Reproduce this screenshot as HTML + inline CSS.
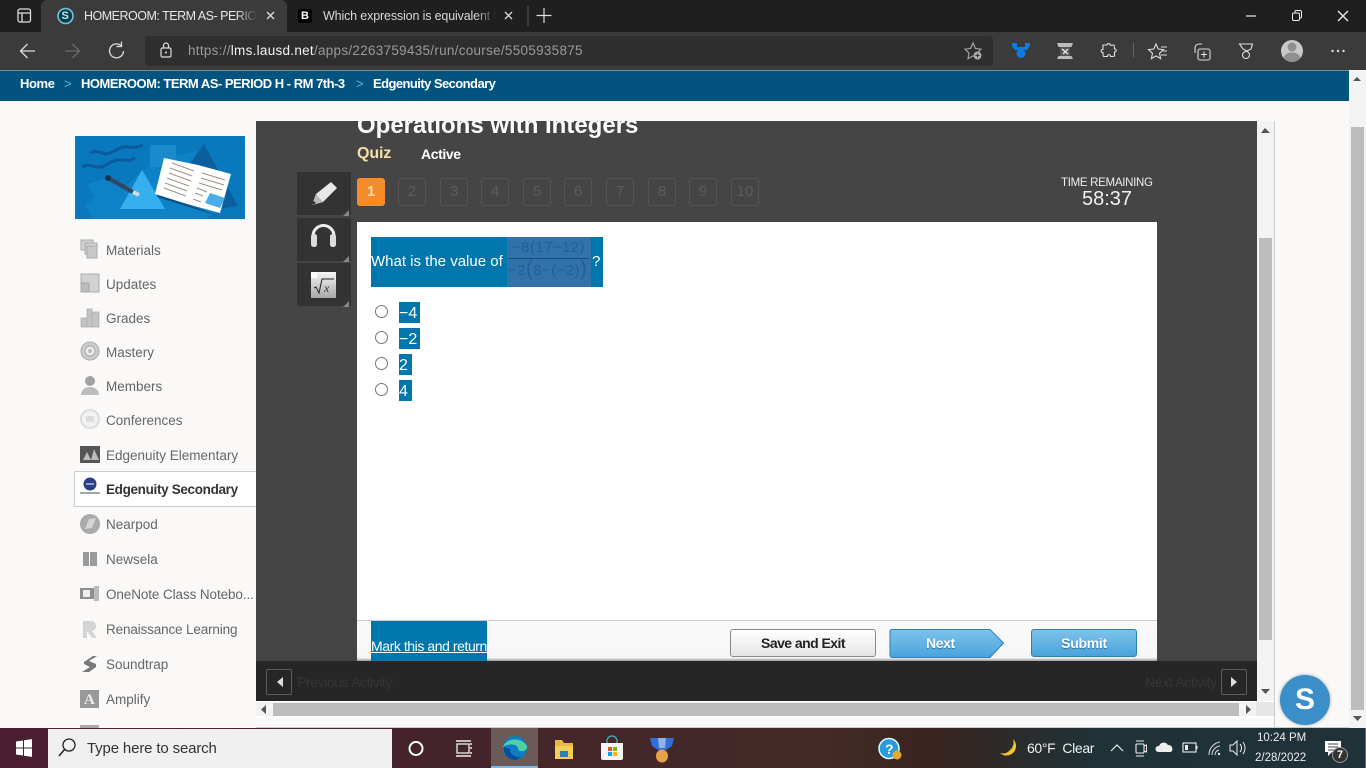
<!DOCTYPE html>
<html><head><meta charset="utf-8"><title>Edgenuity</title>
<style>
html,body{margin:0;padding:0;width:1366px;height:768px;overflow:hidden;background:#faf9f8;font-family:"Liberation Sans",sans-serif}
.a{position:absolute}
.t{position:absolute;white-space:nowrap}
.n{position:absolute;left:106px;font-size:13.5px;color:#666;white-space:nowrap;letter-spacing:0;line-height:18px}
.q{position:absolute;top:178px;width:26px;height:26px;border:1px solid #555;border-radius:3px;color:#5c5c5c;font-size:15px;text-align:center;line-height:26px}
.tool{position:absolute;left:297px;width:54px;height:43px;background:#333}
.hl{position:absolute;left:399px;height:21px;background:#0077ac;color:#fff;font-size:16px;line-height:22px}
.r{position:absolute;left:375px;width:11px;height:11px;border:1px solid #777;border-radius:50%;background:#fff}
.fade{-webkit-mask-image:linear-gradient(90deg,#000 88%,transparent 100%);mask-image:linear-gradient(90deg,#000 88%,transparent 100%)}
</style></head><body>

<!-- browser chrome -->
<div class="a" style="left:0;top:0;width:1366px;height:32px;background:#1f1f1f"></div>
<div class="a" style="left:41px;top:0;width:246px;height:32px;background:#3b3b3b;border-radius:6px 6px 0 0"></div>
<div class="a" style="left:0;top:32px;width:1366px;height:38px;background:#3b3b3b"></div>
<div class="a" style="left:0;top:70px;width:1349px;height:1px;background:#6f8fa3"></div>
<div class="a" style="left:145px;top:36px;width:848px;height:30px;background:#2e2e2e;border-radius:4px"></div>
<div class="t fade" style="left:84px;top:8px;font-size:12.5px;line-height:16px;color:#e6e6e6;width:173px;overflow:hidden;letter-spacing:-.5px">HOMEROOM: TERM AS- PERIOD H</div>
<div class="t fade" style="left:323px;top:8px;font-size:12.5px;line-height:16px;color:#d8d8d8;width:173px;overflow:hidden;letter-spacing:-.15px">Which expression is equivalent to</div>
<div class="t" style="left:188px;top:43px;font-size:13.5px;line-height:16px;color:#9a9a9a;letter-spacing:.28px">https://<span style="color:#f2f2f2">lms.lausd.net</span>/apps/2263759435/run/course/5505935875</div>

<!-- blue breadcrumb -->
<div class="a" style="left:0;top:71px;width:1349px;height:30px;background:#03537f"></div>
<div class="t" style="left:20px;top:76px;font-size:13px;line-height:16px;color:#fff;font-weight:bold;letter-spacing:-.4px">Home</div>
<div class="t" style="left:64px;top:76px;font-size:13px;line-height:16px;color:#5db2e4">&gt;</div>
<div class="t" style="left:81px;top:76px;font-size:13px;line-height:16px;color:#fff;font-weight:bold;letter-spacing:-.5px">HOMEROOM: TERM AS- PERIOD H - RM 7th-3</div>
<div class="t" style="left:356px;top:76px;font-size:13px;line-height:16px;color:#5db2e4">&gt;</div>
<div class="t" style="left:373px;top:76px;font-size:13px;line-height:16px;color:#fff;font-weight:bold;letter-spacing:-.56px">Edgenuity Secondary</div>

<!-- page scrollbar -->
<div class="a" style="left:1349px;top:71px;width:17px;height:657px;background:#f3f3f3"></div>
<div class="a" style="left:1351px;top:127px;width:13px;height:583px;background:#bdbdbd"></div>

<!-- sidebar -->
<svg class="a" style="left:75px;top:136px" width="170" height="83" viewBox="0 0 170 83">
<rect width="170" height="83" fill="#0a78bd"/>
<path d="M12 48l20-6 18 8 30-25 50-12 30 50-30 20H18l-8-14 10-8z" fill="#0d82c8"/>
<path d="M75 9h26v22H75z" fill="#1a8acb"/>
<path d="M100 48L129 8l34 62-28 4z" fill="#0a5f9c"/>
<path d="M67 34L45 73h45z" fill="#36afef"/>
<path d="M15 17c8-5 12 3 20 0s10-7 18-6 10 0 15-2M7 31c8-5 14 3 22-1s10-7 18-6 9 0 13-2" stroke="#0a5a9c" stroke-width="3" fill="none"/>
<path d="M33 42l25 14" stroke="#33475e" stroke-width="4"/><path d="M58 56l6 3" stroke="#cde" stroke-width="4"/>
<circle cx="33" cy="42" r="3" fill="#16304c"/>
<g transform="translate(2,1)">
<path d="M80 60l8-38-6 34 62 24z" fill="#0a4f86"/>
<path d="M87 21l34 7 33 9-11 39-33-9-32-10z" fill="#fff"/>
<path d="M95 26l22 8M93 31l22 8M92 36l22 8M90 41l22 8M88 46l22 8M87 51l22 8M125 36l23 7M124 41l23 7M122 46l23 7M120 51l10 4M118 56l8 3M116 62l8 3" stroke="#9b9388" stroke-width="1" fill="none"/>
<path d="M128 66l5-10 15 5-5 10z" fill="#48aee8"/>
</g>
</svg>

<div class="n" style="top:242px">Materials</div>
<div class="n" style="top:276px">Updates</div>
<div class="n" style="top:310px">Grades</div>
<div class="n" style="top:344px">Mastery</div>
<div class="n" style="top:378px">Members</div>
<div class="n" style="top:412px">Conferences</div>
<div class="n" style="top:447px">Edgenuity Elementary</div>
<div class="a" style="left:74px;top:471px;width:182px;height:34px;background:#fff;border:1px solid #ccc;border-right:none"></div>
<div class="n" style="top:481px;color:#333;font-weight:bold;letter-spacing:-.33px">Edgenuity Secondary</div>
<div class="n" style="top:516px">Nearpod</div>
<div class="n" style="top:551px">Newsela</div>
<div class="n" style="top:586px;letter-spacing:-.1px">OneNote Class Notebo...</div>
<div class="n" style="top:621px;letter-spacing:-.15px">Renaissance Learning</div>
<div class="n" style="top:656px">Soundtrap</div>
<div class="n" style="top:691px">Amplify</div>

<svg class="a" style="left:78px;top:238px" width="24" height="490" viewBox="0 0 24 490">
<g fill="#d2d2d2" stroke="#aaa">
<rect x="3" y="2" width="12" height="10"/><rect x="7" y="5" width="12" height="11"/><rect x="9" y="8" width="10" height="12" fill="#c8c8c8"/>
<rect x="3" y="36" width="18" height="18"/><rect x="3" y="45" width="8" height="9" fill="#bbb"/>
</g>
<path d="M3 80h6v9H3zM9 71h5v18H9zM14 74h7v15h-7z" fill="#c4c4c4" stroke="#aaa" stroke-width=".7"/>
<circle cx="12" cy="113" r="9" fill="#ccc" stroke="#aaa"/><circle cx="12" cy="113" r="5" fill="#eee" stroke="#aaa"/><circle cx="12" cy="113" r="2" fill="#bbb"/>
<circle cx="12" cy="143" r="5" fill="#a2a2a2"/><path d="M3 157c0-6 5-8 9-8s9 2 9 8z" fill="#bdbdbd"/>
<circle cx="12" cy="181" r="9" fill="#f2f2f2" stroke="#ddd" stroke-width="2"/><rect x="8" y="178" width="8" height="6" fill="#ddd"/>
<rect x="2" y="208" width="20" height="17" fill="#555"/><path d="M5 222l4-8 4 8zM13 222l3-11 5 11z" fill="#bbb"/>
<circle cx="12" cy="246" r="6.5" fill="#2a3f83"/><path d="M2 254h20v2H2z" fill="#9aa"/><path d="M8 246h8" stroke="#fff"/>
<circle cx="12" cy="286" r="10" fill="#aaa"/><path d="M7 291l4-10 7-1-4 10z" fill="#d5d5d5"/>
<path d="M5 314h6v14H5zM12 314h7v14h-7z" fill="#9a9a9a"/>
<path d="M2 350h14v11H2z" fill="#8f8f8f"/><path d="M16 348h5v15h-5z" fill="#bbb"/><rect x="5" y="352" width="7" height="7" fill="#eee"/>
<path d="M5 383h8c6 0 7 9 1 10l5 7h-5l-5-7v7H5z" fill="#d4d4d4"/>
<path d="M6 424l9-6h4l-8 5 7 3v3l-7 5H4l8-5-6-3z" fill="#777"/>
<rect x="2" y="452" width="19" height="18" fill="#999"/><text x="6" y="466" font-family="Liberation Serif" font-weight="bold" font-size="15" fill="#eee">A</text>
<rect x="2" y="487" width="19" height="3" fill="#aaa"/>
</svg>

<!-- activity frame -->
<div class="a" style="left:256px;top:121px;width:1001px;height:540px;background:#454545;overflow:hidden">
  <div class="t" style="left:101px;top:-9px;font-size:24px;line-height:28px;font-weight:bold;color:#fff">Operations with Integers</div>
</div>
<div class="a" style="left:256px;top:661px;width:1001px;height:40px;background:#262626"></div>
<div class="a" style="left:1257px;top:121px;width:17px;height:580px;background:#f3f3f3"></div>
<div class="a" style="left:1259px;top:238px;width:13px;height:402px;background:#bdbdbd"></div>
<div class="a" style="left:1274px;top:121px;width:1px;height:607px;background:#ccc"></div>
<div class="a" style="left:256px;top:701px;width:1018px;height:17px;background:#fff"></div>
<div class="a" style="left:256px;top:702px;width:1018px;height:14px;background:#f3f3f3"></div>
<div class="a" style="left:273px;top:703px;width:966px;height:13px;background:#bdbdbd"></div>
<div class="a" style="left:1256px;top:702px;width:18px;height:14px;background:#e6e6e6"></div>
<div class="a" style="left:256px;top:727px;width:1093px;height:1px;background:#ccc"></div>

<div class="t" style="left:357px;top:145px;font-size:16px;line-height:18px;font-weight:bold;color:#f6e0a8;letter-spacing:-.1px">Quiz</div>
<div class="t" style="left:421px;top:146px;font-size:14px;line-height:17px;font-weight:bold;color:#fff;letter-spacing:-.4px">Active</div>

<div class="tool" style="top:172px"></div><div class="tool" style="top:218px"></div><div class="tool" style="top:263px"></div>
<svg class="a" style="left:297px;top:172px" width="54" height="136" viewBox="0 0 54 136">
<path d="M15 33l4-11 15-12 6 6-14 14z" fill="#e8e8e8"/><path d="M15 33l4-11 7 8z" fill="#bbb"/><path d="M15 33l1.500-4 2.500 2z" fill="#222"/>
<path d="M16 66v-2a10.500 10.500 0 0 1 21 0v2" fill="none" stroke="#eee" stroke-width="3"/>
<rect x="14" y="62" width="6" height="13" rx="2.500" fill="#ddd"/><rect x="33" y="62" width="6" height="13" rx="2.500" fill="#ddd"/>
<path d="M19 100l-5 5v21h25v-26z" fill="url(#g)"/><path d="M14 100h6v6h-6z" fill="#fff"/>
<defs><linearGradient id="g" x1="0" x2="0" y1="0" y2="1"><stop offset="0" stop-color="#f5f5f5"/><stop offset="1" stop-color="#a8a8a8"/></linearGradient></defs>
<path d="M17 116l2-1 3 6 3-14h12" fill="none" stroke="#222" stroke-width="1"/>
<text x="27" y="120" font-family="Liberation Serif" font-style="italic" font-size="12" fill="#333">x</text>
<path d="M52 38v6h-6zM52 84v6h-6zM52 129v6h-6z" fill="#888"/>
</svg>

<div class="a" style="left:357px;top:178px;width:28px;height:28px;border-radius:3px;background:#f68b2a;color:#fff;font-size:15px;font-weight:bold;text-align:center;line-height:28px"><span style="color:#fbdcb8">1</span></div>
<div class="q" style="left:398px">2</div><div class="q" style="left:440px">3</div><div class="q" style="left:481px">4</div><div class="q" style="left:523px">5</div><div class="q" style="left:564px">6</div><div class="q" style="left:606px">7</div><div class="q" style="left:648px">8</div><div class="q" style="left:689px">9</div><div class="q" style="left:731px">10</div>

<div class="t" style="left:1061px;top:176px;font-size:11.5px;line-height:14px;color:#eee;letter-spacing:-.3px">TIME REMAINING</div>
<div class="t" style="left:1082px;top:186px;font-size:20px;line-height:26px;color:#f2f2f2">58:37</div>

<!-- question panel -->
<div class="a" style="left:357px;top:222px;width:800px;height:438px;background:#fff"></div>
<div class="a" style="left:371px;top:237px;width:232px;height:50px;background:#0077ac"></div>
<div class="a" style="left:507px;top:237px;width:84px;height:50px;background:#3172aa"></div>
<div class="t" style="left:371px;top:253px;font-size:15px;line-height:17px;color:#fff">What is the value of</div>
<div class="t" style="left:592px;top:253px;font-size:15px;line-height:17px;color:#fff">?</div>
<div class="a" style="left:508px;top:258px;width:81px;height:1px;background:#14507f"></div>
<div class="t" style="left:512px;top:239px;font-size:15px;line-height:17px;color:#235f96;letter-spacing:.4px">−8(17−12)</div>
<div class="t" style="left:508px;top:260px;font-size:15px;line-height:17px;color:#235f96;letter-spacing:.4px">−2<span style="font-size:21px;line-height:17px">(</span>8−(−2)<span style="font-size:21px;line-height:17px">)</span></div>

<div class="r" style="top:305px"></div><div class="r" style="top:331px"></div><div class="r" style="top:357px"></div><div class="r" style="top:383px"></div>
<div class="hl" style="top:302px;width:21px"><span style="position:absolute;left:0;top:1px">−4</span></div>
<div class="hl" style="top:328px;width:21px"><span style="position:absolute;left:0;top:1px">−2</span></div>
<div class="hl" style="top:354px;width:13px"><span style="position:absolute;left:0;top:1px">2</span></div>
<div class="hl" style="top:380px;width:13px"><span style="position:absolute;left:0;top:1px">4</span></div>

<div class="a" style="left:357px;top:620px;width:800px;height:40px;background:linear-gradient(#fafafa,#f6f6f6);border-top:1px solid #ccc;box-sizing:border-box"></div>
<div class="a" style="left:357px;top:658px;width:800px;height:3px;background:linear-gradient(#f0f0f0,#999)"></div>
<div class="a" style="left:371px;top:621px;width:116px;height:40px;background:#0077ac"></div>
<div class="t" style="left:371px;top:638px;font-size:14px;line-height:16px;color:#fff;text-decoration:underline;letter-spacing:-.43px">Mark this and return</div>

<div class="a" style="left:730px;top:629px;width:146px;height:28px;box-sizing:border-box;border:1px solid #8a8a8a;border-radius:3px;background:linear-gradient(#fff,#e6e6e6);text-align:center;font-size:14px;font-weight:bold;line-height:26px;color:#222;letter-spacing:-.55px">Save and Exit</div>
<svg class="a" style="left:889px;top:629px" width="116" height="30" viewBox="0 0 116 30">
<defs><linearGradient id="b" x1="0" x2="0" y1="0" y2="1"><stop offset="0" stop-color="#7cc3ec"/><stop offset="1" stop-color="#4aa3dc"/></linearGradient></defs>
<path d="M3 .5h98L114.500 14 101 28.500H3a2 2 0 0 1-2-2V2.500a2 2 0 0 1 2-2z" fill="url(#b)" stroke="#2f7fb4"/></svg>
<div class="t" style="left:926px;top:635px;font-size:14px;line-height:17px;font-weight:bold;color:#fff;text-shadow:0 1px 1px #2a6e9e;letter-spacing:-.4px">Next</div>
<div class="a" style="left:1031px;top:629px;width:106px;height:28px;box-sizing:border-box;border:1px solid #2f7fb4;border-radius:3px;background:linear-gradient(#7cc3ec,#4aa3dc);text-align:center;font-size:14px;font-weight:bold;line-height:27px;color:#fff;text-shadow:0 1px 1px #2a6e9e;letter-spacing:-.3px">Submit</div>

<!-- bottom bar -->
<div class="a" style="left:266px;top:669px;width:24px;height:24px;border:1px solid #5c5c5c;border-radius:2px"></div>
<div class="a" style="left:1221px;top:669px;width:24px;height:24px;border:1px solid #5c5c5c;border-radius:2px"></div>
<div class="t" style="left:297px;top:674px;font-size:14px;line-height:16px;color:#363636;letter-spacing:-.4px">Previous Activity</div>
<div class="t" style="left:1145px;top:674px;font-size:14px;line-height:16px;color:#363636;letter-spacing:-.35px">Next Activity</div>
<svg class="a" style="left:0;top:0;pointer-events:none" width="1366" height="768" viewBox="0 0 1366 768">
<path d="M283 677l-6 5 6 5zM1231 677l6 5-6 5z" fill="#ddd"/>
<path d="M1261 133l4-5 5 5zM1261 689h9l-4.500 5zM266 705v9l-5-4.500zM1246 705v9l5-4.500zM1353 81l4-4 4 4zM1353 716h9l-4.500 5z" fill="#555"/>
<!-- tab/window icons -->
<rect x="18" y="9" width="12.500" height="13" rx="2" fill="none" stroke="#ddd" stroke-width="1.300"/><path d="M18 13h13M22 13v9" stroke="#ddd" stroke-width="1.300"/>
<circle cx="65.500" cy="16" r="7.500" fill="#0b3d46" stroke="#6fc6d6" stroke-width="1.600"/>
<path d="M267 12l7 7M274 12l-7 7M505 12l7 7M512 12l-7 7" stroke="#ddd" stroke-width="1.300"/>
<rect x="298" y="9" width="14" height="14" rx="2" fill="#000"/>
<path d="M528 6v20" stroke="#555"/><path d="M544 8v15M536.500 15.500h15" stroke="#ddd" stroke-width="1.200"/>
<path d="M1246 16h10" stroke="#eee" stroke-width="1.200"/>
<rect x="1292.500" y="13" width="7" height="7.500" rx="1.500" fill="none" stroke="#eee"/><path d="M1295 13v-1.500a1 1 0 0 1 1-1h4a1.500 1.500 0 0 1 1.500 1.500v5a1 1 0 0 1-1 1H1299.500" fill="none" stroke="#eee"/>
<path d="M1338 11l10 10M1348 11l-10 10" stroke="#eee" stroke-width="1.300"/>
<!-- nav -->
<path d="M35 51H21M27.500 44l-7 7 7 7" fill="none" stroke="#ddd" stroke-width="1.300"/>
<path d="M79 51H65M72.500 44l7 7-7 7" fill="none" stroke="#6a6a6a" stroke-width="1.300"/>
<path d="M121 45.500a7 7 0 1 0 2.500 5.500" fill="none" stroke="#ddd" stroke-width="1.300"/><path d="M121.500 41.500v5h-5" fill="none" stroke="#ddd" stroke-width="1.300"/>
<rect x="161" y="48" width="10" height="9" rx="1.500" fill="none" stroke="#ddd" stroke-width="1.200"/><path d="M163.500 48v-2.500a2.500 2.500 0 0 1 5 0V48" fill="none" stroke="#ddd" stroke-width="1.200"/><circle cx="166" cy="52.500" r="1" fill="#ddd"/>
<!-- right toolbar -->
<path d="M973 43l2.500 5.500 5.500.7-4 4 1 5.500-5-2.800-5 2.800 1-5.500-4-4 5.500-.7z" fill="none" stroke="#aaa" stroke-width="1.100"/><circle cx="977.500" cy="55.500" r="4" fill="#aaa"/><path d="M975.500 55.500h4M977.500 53.500v4" stroke="#333"/>
<path d="M1012 43h5v4h8v-4h5v3l-3 4h-12l-3-4z" fill="#0f7be0"/><circle cx="1021" cy="53.500" r="4.500" fill="#0f7be0"/>
<path d="M1057 43h16l-1.500 4h-13zM1057 59h16l-1.500-3h-13z" fill="#bbb"/><path d="M1060 47h10v9h-10z" fill="#555"/><path d="M1062 49l6 5M1068 49l-5 5" stroke="#ddd" stroke-width="1.500"/>
<path d="M1107 45c0-2 3-2 3 0 0 .5 4 0 4 0 .5 0 .5 4 .5 4 2-.5 2.500 3 0 3v4c0 .5-4 .5-4 .5 .3-2.500-3.500-2.500-3 0h-4c-.5 0-.5-4-.5-4-2.500 .5-2.500-3.500 0-3v-4.500z" fill="none" stroke="#ddd" stroke-width="1.100"/>
<path d="M1133.500 43v14" stroke="#666"/>
<path d="M1156 44l2.200 5 5.300.6-4 3.700 1.100 5.300-4.600-2.700-4.600 2.700 1.100-5.300-4-3.700 5.300-.6z" fill="none" stroke="#ddd" stroke-width="1.100"/><path d="M1161 47h6M1163 51h4M1161 55h6" stroke="#ddd"/>
<rect x="1198" y="49" width="12" height="11" rx="2" fill="none" stroke="#ddd" stroke-width="1.100"/><path d="M1204 51.500v6M1201 54.500h6M1195 53v-5a4 4 0 0 1 4-4h3" fill="none" stroke="#ddd" stroke-width="1.100"/>
<path d="M1239.500 44h13l-1.500 5-4 2-4-2z" fill="none" stroke="#ddd" stroke-width="1.100"/><circle cx="1246" cy="55" r="3.500" fill="none" stroke="#ddd" stroke-width="1.100"/>
<circle cx="1292" cy="51" r="11" fill="#c8c8c8"/><circle cx="1292" cy="47" r="4.500" fill="#8f8f8f"/><path d="M1283.500 58c1-4 5-5.500 8.500-5.500s7.500 1.500 8.500 5.500a11 11 0 0 1-17 0z" fill="#8f8f8f"/>
<circle cx="1332.500" cy="51" r="1.200" fill="#ddd"/><circle cx="1338" cy="51" r="1.200" fill="#ddd"/><circle cx="1343.500" cy="51" r="1.200" fill="#ddd"/>
</svg>
<div class="t" style="left:61.500px;top:9px;font-size:11px;line-height:14px;font-weight:bold;color:#bfe9f2">S</div>
<div class="t" style="left:301px;top:9px;font-size:11px;line-height:14px;font-weight:bold;color:#fff">B</div>

<!-- taskbar -->
<div class="a" style="left:0;top:728px;width:1366px;height:40px;background:linear-gradient(90deg,#4a1f30 0,#45222c 25%,#432a28 60%,#3a2420 68%,#1f3236 80%,#1e3238 100%)"></div>
<div class="a" style="left:48px;top:729px;width:344px;height:39px;background:#f0f0f0"></div>
<div class="t" style="left:87px;top:740px;font-size:15px;line-height:18px;color:#333;letter-spacing:-.15px">Type here to search</div>
<div class="a" style="left:491px;top:728px;width:47px;height:40px;background:#6b5a55"></div>
<div class="a" style="left:491px;top:766px;width:47px;height:2px;background:#7cb9e8"></div>
<div class="t" style="left:1027px;top:739px;font-size:14px;line-height:18px;color:#f0f0f0;letter-spacing:-.35px">60°F&nbsp; Clear</div>
<div class="t" style="left:1257px;top:731px;font-size:11.5px;line-height:15px;color:#eee">10:24 PM</div>
<div class="t" style="left:1255px;top:751px;font-size:11.5px;line-height:15px;color:#eee">2/28/2022</div>
<svg class="a" style="left:0;top:728px" width="1366" height="40" viewBox="0 0 1366 40">
<path d="M16 13.500l7-1v7h-7zM24 12.300l8-1.200v8.400h-8zM16 20.500h7v7l-7-1zM24 20.500h8v8.400l-8-1.200z" fill="#fff"/>
<circle cx="69" cy="17" r="6" fill="none" stroke="#222" stroke-width="1.300"/><path d="M64.500 21.500L59 28" stroke="#222" stroke-width="1.500"/>
<circle cx="416" cy="20.500" r="6.500" fill="none" stroke="#fff" stroke-width="2"/>
<path d="M456 13h15M456 28h15" stroke="#eee" stroke-width="1.500"/><rect x="457" y="16" width="12" height="9" fill="none" stroke="#eee" stroke-width="1.300"/><path d="M471 15v2M471 19v2M471 24v2" stroke="#eee" stroke-width="1.500"/>
<circle cx="515" cy="20" r="12" fill="#0f7dc2"/><path d="M503 19c3-9 18-11 24-1 1 6-9 7-9 2 0-3-8-6-15-1z" fill="#4fd1a5"/><path d="M510 21c0 6 6 9 12 8l-6 3c-8 0-13-6-12-13z" fill="#0a4d9a"/>
<path d="M555 12h7l2 3h9v4h-18z" fill="#e8b93e"/><path d="M555 18h18v13h-18z" fill="#f3cd5a"/><rect x="560" y="23" width="8" height="6" fill="#2f7fc0"/>
<path d="M601 15h22v15a2 2 0 0 1-2 2h-18a2 2 0 0 1-2-2z" fill="#f5f5f5"/><path d="M607 15v-2a5 5 0 0 1 10 0v2" fill="none" stroke="#3aa0b5" stroke-width="1.500"/>
<rect x="608" y="19" width="4" height="4" fill="#e8502a"/><rect x="613" y="19" width="4" height="4" fill="#7fba00"/><rect x="608" y="24" width="4" height="4" fill="#00a4ef"/><rect x="613" y="24" width="4" height="4" fill="#ffb900"/>
<path d="M650 10h24l-2 8-6 4h-8l-6-4z" fill="#2f6fd6"/><path d="M658 10h8l-1 10h-6z" fill="#8fb4ea"/><ellipse cx="662" cy="28" rx="6" ry="6.500" fill="#e9a148"/>
<circle cx="889" cy="20.500" r="10" fill="#2a9adf" stroke="#dff" stroke-width="1.500"/><circle cx="897" cy="27" r="4.500" fill="#e8a828"/>
<path d="M1013 11a9 9 0 0 1-13 14 9 9 0 0 0 10-3 10 10 0 0 0 3-11z" fill="#f2c530"/>
<path d="M1111 23l6-6 6 6" fill="none" stroke="#eee" stroke-width="1.200"/>
<rect x="1136" y="16" width="8" height="9" rx="1" fill="none" stroke="#eee" stroke-width="1.100"/><path d="M1144 18l2.500-1v7l-2.500-1M1136 13h8M1136 28h8" fill="none" stroke="#eee"/>
<path d="M1158 24a3 3 0 0 1 1-6 5 5 0 0 1 9-1 4 4 0 0 1 3 7z" fill="#eee"/>
<rect x="1183" y="15" width="13" height="9" fill="none" stroke="#eee" stroke-width="1.100"/><rect x="1185" y="17" width="3" height="5" fill="#eee"/><path d="M1197 18v3" stroke="#eee"/>
<path d="M1209 27a13 13 0 0 1 11-13M1212 27a9 9 0 0 1 8-9M1215 27a5 5 0 0 1 4-5" fill="none" stroke="#ddd"/><circle cx="1219" cy="26" r="1.200" fill="#eee"/>
<path d="M1230 17h3l4-4v14l-4-4h-3z" fill="none" stroke="#eee"/><path d="M1240 16a6 6 0 0 1 0 8M1243 14a10 10 0 0 1 0 12" fill="none" stroke="#eee"/>
<path d="M1325 13h16v11h-16z" fill="#fff"/><path d="M1328 16h10M1328 19h10M1328 22h10" stroke="#444"/><path d="M1328 24v4l4-4z" fill="#fff"/>
<circle cx="1340" cy="27" r="7.500" fill="#333" stroke="#999"/>
<path d="M1365.500 0v40" stroke="#667"/>
</svg>
<div class="t" style="left:1337px;top:748px;font-size:11px;line-height:14px;font-weight:bold;color:#fff">7</div>
<div class="t" style="left:885px;top:741px;font-size:14px;line-height:16px;font-weight:bold;color:#fff">?</div>

<!-- floating S -->
<div class="a" style="left:1280px;top:675px;width:50px;height:50px;border-radius:50%;background:#3a8fc9;box-shadow:0 0 3px rgba(0,0,0,.35);color:#fff;font-size:30px;font-weight:bold;text-align:center;line-height:50px">S</div>
</body></html>
